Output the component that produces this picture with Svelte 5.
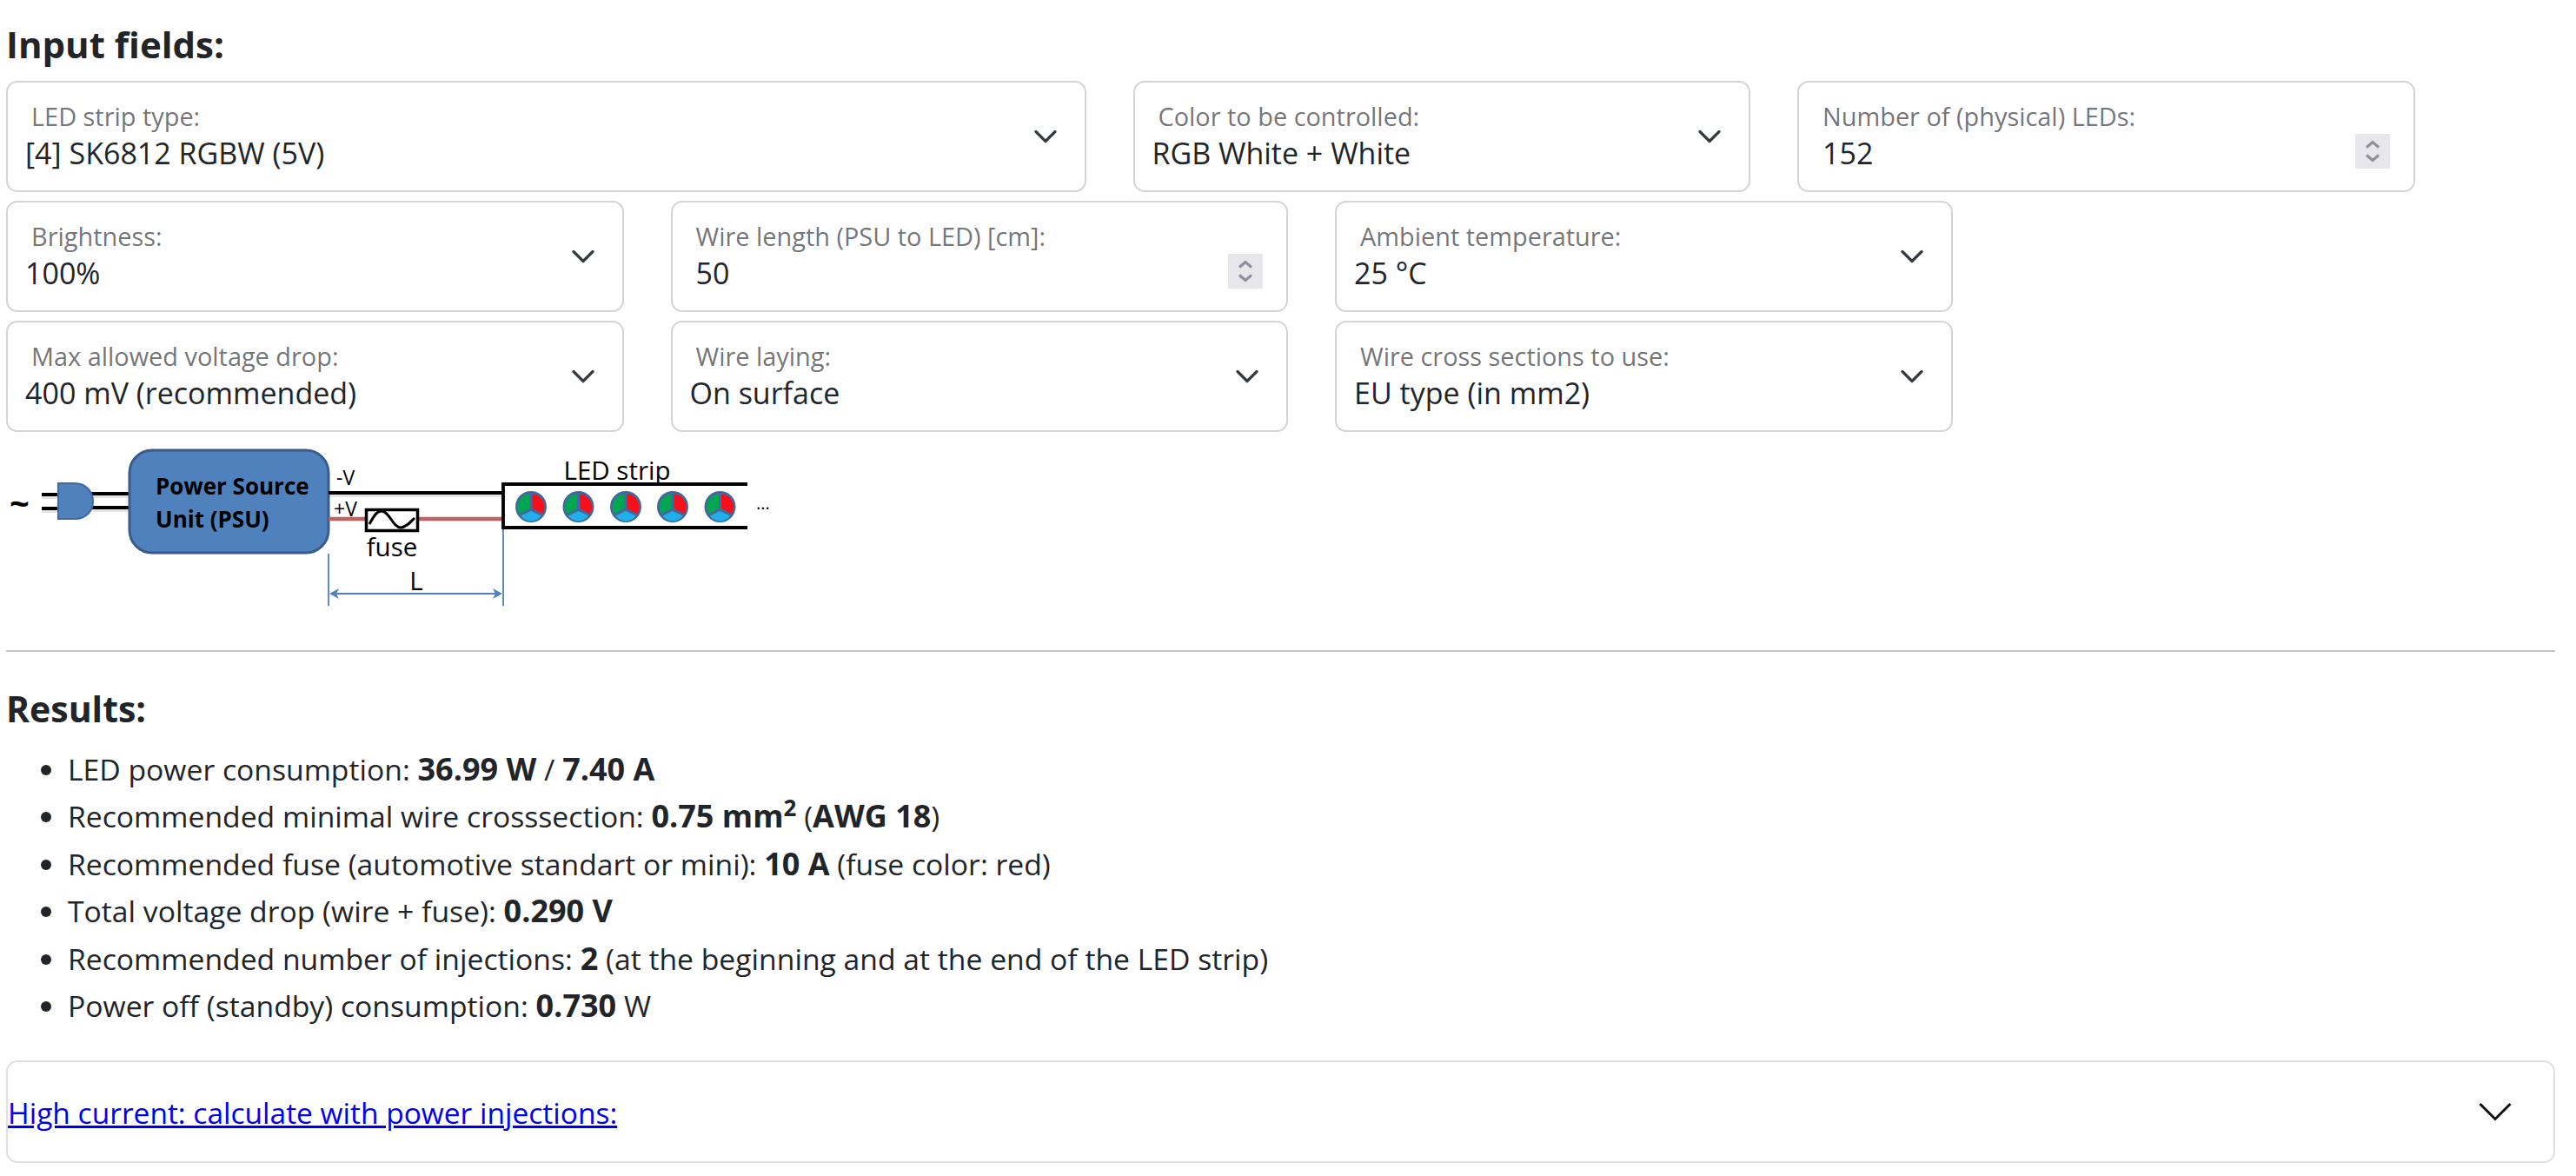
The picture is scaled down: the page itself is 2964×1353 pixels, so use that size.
<script>
  const rows = [
    [
      { label: 'LED strip type:', value: '[4] SK6812 RGBW (5V)', size: 'wide' },
      { label: 'Color to be controlled:', value: 'RGB White + White' },
      { label: 'Number of (physical) LEDs:', value: '152', spin: true }
    ],
    [
      { label: 'Brightness:', value: '100%' },
      { label: 'Wire length (PSU to LED) [cm]:', value: '50', spin: true },
      { label: 'Ambient temperature:', value: '25 °C' }
    ],
    [
      { label: 'Max allowed voltage drop:', value: '400 mV (recommended)' },
      { label: 'Wire laying:', value: 'On surface' },
      { label: 'Wire cross sections to use:', value: 'EU type (in mm2)' }
    ]
  ]
  const leds = [611, 665.5, 720, 774, 828.5]
</script>

<main class="page">
  <h2 class="title">Input fields:</h2>

  {#each rows as row}
    <div class="row">
      {#each row as f}
        <div class="cell" class:wide={f.size === 'wide'}>
          <div class="field">
            <span class="label">{f.label}</span>
            <span class="value" class:num={f.spin}>{f.value}</span>
            {#if f.spin}
              <span class="spin">
                <svg width="18" height="28" viewBox="0 0 18 28"><path d="M2 9.500 9 3.500 16 9.500M2 18.500 9 24.500 16 18.500" fill="none" stroke="#8e8e99" stroke-width="3"/></svg>
              </span>
            {:else}
              <svg class="arrow" width="26" height="16" viewBox="0 0 26 16"><path d="M2 2.500 13 13.500 24 2.500" fill="none" stroke="#343a40" stroke-width="3.200" stroke-linecap="round" stroke-linejoin="round"/></svg>
            {/if}
          </div>
        </div>
      {/each}
    </div>
  {/each}

  <svg class="diagram" width="920" height="200" viewBox="7 507 920 200">
    <text x="11" y="594" class="t tilde">~</text>
    <path d="M48 572H68M48 588H68M107 571H150M107 587H150M378 570H579" stroke="#e4e4e4" stroke-width="4"/>
    <path d="M48 569H68M48 585H68" stroke="#000" stroke-width="4"/>
    <path d="M105 568H150M105 584H150" stroke="#000" stroke-width="4"/>
    <path d="M67 556H86C100 556 107 567 107 577C107 587 100 597 86 597H67Z" fill="#4f81bd" stroke="#41699c" stroke-width="2"/>
    <rect x="149" y="518" width="229" height="118" rx="26" fill="#4f81bd" stroke="#385d8a" stroke-width="3"/>
    <text x="179" y="569" class="t psu">Power Source</text>
    <text x="179" y="607" class="t psu">Unit (PSU)</text>
    <text x="387" y="558" class="t small">-V</text>
    <text x="384" y="594" class="t small">+V</text>
    <path d="M378 567H579" stroke="#000" stroke-width="4"/>
    <path d="M378 597H579" stroke="#c06060" stroke-width="4.500"/>
    <rect x="421.500" y="586.500" width="59" height="24" fill="#fff" stroke="#000" stroke-width="3.500"/>
    <path d="M425 603C431 592 434 588 439 588C448 588 452 607 461 607C467 607 472 601 477 596" fill="none" stroke="#000" stroke-width="3"/>
    <text x="451" y="640" class="t mid" text-anchor="middle">fuse</text>
    <text x="479" y="679" class="t mid" text-anchor="middle">L</text>
    <path d="M378 637V697M579 608V697M382 683H576" stroke="#4f81bd" stroke-width="1.800"/>
    <path d="M379 683 390 677 387 683 390 689ZM578 683 567 677 570 683 567 689Z" fill="#4f81bd"/>
    <text x="710" y="552" class="t mid" text-anchor="middle">LED strip</text>
    <path d="M860 557H579V607H860" fill="none" stroke="#000" stroke-width="3.800"/>
    {#each leds as x}
      <g transform="translate({x} 583)">
        <circle r="18" fill="#41699c"/>
        <path d="M-1.500 -14.500V2L-13 8A14.500 14.500 0 0 1-1.500 -14.500Z" fill="#00a651"/>
        <path d="M1.500 -14.500V2L13 8A14.500 14.500 0 0 0 1.500 -14.500Z" fill="#f5101c"/>
        <path d="M0 5 11.700 10.500A14.500 14.500 0 0 1-11.700 10.500Z" fill="#1fb0ec"/>
      </g>
    {/each}
    <text x="870" y="586" class="t dots">...</text>
  </svg>

  <hr class="rule" />

  <h3 class="results">Results:</h3>
  <ul class="list">
    <li>LED power consumption: <b>36.99 W</b> / <b>7.40 A</b></li>
    <li>Recommended minimal wire crosssection: <b>0.75 mm<sup>2</sup></b> (<b>AWG 18</b>)</li>
    <li>Recommended fuse (automotive standart or mini): <b>10 A</b> (fuse color: red)</li>
    <li>Total voltage drop (wire + fuse): <b>0.290 V</b></li>
    <li>Recommended number of injections: <b>2</b> (at the beginning and at the end of the LED strip)</li>
    <li>Power off (standby) consumption: <b>0.730</b> W</li>
  </ul>

  <div class="accordion">
    <a href="#more" class="link">High current: calculate with power injections:</a>
    <svg class="acc-arrow" width="40" height="24" viewBox="0 0 40 24"><path d="M2.500 3 20 20.500 37.500 3" fill="none" stroke="#111" stroke-width="3"/></svg>
  </div>
</main>

<style>
  :global(body) {
    margin: 0;
    background: #fff;
  }

  .page {
    font-family: "Open Sans", "Noto Sans", sans-serif;
    font-size: 34px;
    line-height: 54px;
    color: #212529;
    padding: 0 24px 17px 7px;
  }

  .title {
    margin: 0;
    padding-top: 24px;
    height: 93px;
    box-sizing: border-box;
    font-size: 42px;
    line-height: 54px;
    font-weight: 700;
  }

  .row {
    display: flex;
    margin-bottom: 10px;
  }

  .cell {
    flex: 0 0 764.500px;
  }

  .cell.wide {
    flex-basis: 1296.500px;
  }

  .field {
    position: relative;
    height: 128px;
    width: calc(100% - 54px);
    box-sizing: border-box;
    border: 2.250px solid #d2d4d7;
    border-radius: 13px;
    background: #fff;
  }

  .label {
    position: absolute;
    left: 27px;
    top: 22px;
    font-size: 28.900px;
    line-height: 34px;
    color: rgba(33, 37, 41, 0.65);
    white-space: nowrap;
  }

  .value {
    position: absolute;
    left: 20px;
    top: 56px;
    line-height: 50px;
    white-space: nowrap;
  }

  .value.num {
    left: 27px;
  }

  .arrow {
    position: absolute;
    right: 32px;
    top: 54px;
  }

  .spin {
    position: absolute;
    right: 27px;
    top: 59px;
    width: 40px;
    height: 40px;
    background: #e6e6eb;
    display: flex;
    align-items: center;
    justify-content: center;
  }

  .diagram {
    display: block;
  }

  .rule {
    margin: 41px 0 0;
    border: 0;
    border-top: 2px solid #c4c6c8;
  }

  .results {
    margin: 0;
    padding-top: 38px;
    font-size: 41px;
    line-height: 54px;
    font-weight: 700;
  }

  .list {
    margin: 16px 0 0;
    padding-left: 71px;
    font-size: 33.700px;
    line-height: 54.400px;
  }

  .list b {
    font-size: 36px;
    font-weight: 700;
  }

  .list sup {
    font-size: 26px;
    line-height: 0;
  }

  .accordion {
    margin-top: 36px;
    height: 118px;
    box-sizing: border-box;
    border: 2.250px solid #dfe0e3;
    border-radius: 13px;
    display: flex;
    align-items: center;
    justify-content: space-between;
    padding-right: 47px;
  }

  .link {
    color: #0000ee;
    text-decoration: underline;
    font-size: 33.500px;
    padding-top: 2px;
  }

  .t {
    font-family: "Open Sans", sans-serif;
    fill: #000;
  }

  .tilde {
    font-size: 40px;
    font-weight: 700;
  }

  .psu {
    font-size: 26px;
    font-weight: 700;
  }

  .small {
    font-size: 23px;
  }

  .mid {
    font-size: 29.500px;
  }

  .dots {
    font-size: 20px;
  }
</style>
